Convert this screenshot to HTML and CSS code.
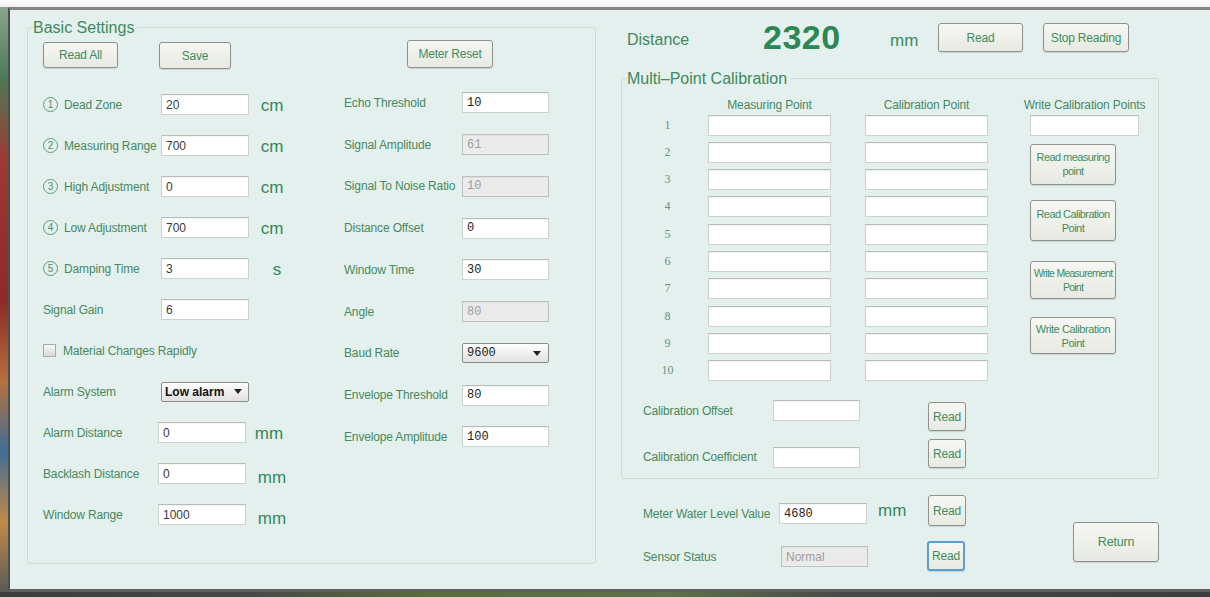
FILE: index.html
```html
<!DOCTYPE html>
<html lang="en">
<head>
<meta charset="utf-8">
<title>Level Meter Settings</title>
<link rel="stylesheet" href="styles.css">
</head>
<body>
<div class="screen">
  <div class="wall-top"></div>
  <div class="desk">
    <div class="wall-side"></div>
    <main class="window">

      <fieldset class="group basic">
        <legend>Basic Settings</legend>
        <div class="basic-body">

          <section class="col-main">
            <div class="btn-row">
              <button class="btn btn-readall">Read All</button>
              <button class="btn btn-save">Save</button>
            </div>
            <div class="form-main">
              <div class="frow"><span class="lbl"><span class="num">1</span>Dead Zone</span><input class="field" value="20"><span class="unit">cm</span></div>
              <div class="frow"><span class="lbl"><span class="num">2</span>Measuring Range</span><input class="field" value="700"><span class="unit">cm</span></div>
              <div class="frow"><span class="lbl"><span class="num">3</span>High Adjustment</span><input class="field" value="0"><span class="unit">cm</span></div>
              <div class="frow"><span class="lbl"><span class="num">4</span>Low Adjustment</span><input class="field" value="700"><span class="unit">cm</span></div>
              <div class="frow"><span class="lbl"><span class="num">5</span>Damping Time</span><input class="field" value="3"><span class="unit unit-s">s</span></div>
              <div class="frow"><span class="lbl">Signal Gain</span><input class="field" value="6"></div>
              <div class="frow"><span class="check"></span><span class="lbl">Material Changes Rapidly</span></div>
              <div class="frow"><span class="lbl">Alarm System</span><div class="combo combo-alarm"><b>Low alarm</b><span class="arrow"></span></div></div>
              <div class="frow"><span class="lbl">Alarm Distance</span><input class="field field-shift" value="0"><span class="unit">mm</span></div>
              <div class="frow"><span class="lbl">Backlash Distance</span><input class="field field-shift" value="0"><span class="unit unit-low">mm</span></div>
              <div class="frow"><span class="lbl">Window Range</span><input class="field field-shift" value="1000"><span class="unit unit-low">mm</span></div>
            </div>
          </section>

          <section class="col-aux">
            <div class="btn-row">
              <button class="btn btn-reset">Meter Reset</button>
            </div>
            <div class="form-aux">
              <div class="frow"><span class="lbl">Echo Threshold</span><input class="field mono" value="10"></div>
              <div class="frow"><span class="lbl">Signal Amplitude</span><input class="field mono" value="61" disabled></div>
              <div class="frow"><span class="lbl">Signal To Noise Ratio</span><input class="field mono" value="10" disabled></div>
              <div class="frow"><span class="lbl">Distance Offset</span><input class="field mono" value="0"></div>
              <div class="frow"><span class="lbl">Window Time</span><input class="field mono" value="30"></div>
              <div class="frow"><span class="lbl">Angle</span><input class="field mono" value="80" disabled></div>
              <div class="frow"><span class="lbl">Baud Rate</span><div class="combo combo-baud"><span>9600</span><span class="arrow"></span></div></div>
              <div class="frow"><span class="lbl">Envelope Threshold</span><input class="field mono" value="80"></div>
              <div class="frow"><span class="lbl">Envelope Amplitude</span><input class="field mono" value="100"></div>
            </div>
          </section>

        </div>
      </fieldset>

      <section class="calib-side">
        <div class="distance-row">
          <span class="dist-label">Distance</span>
          <span class="dist-value">2320</span>
          <span class="dist-unit">mm</span>
          <button class="btn btn-read-dist">Read</button>
          <button class="btn btn-stop">Stop Reading</button>
        </div>

        <fieldset class="group calib">
          <legend>Multi–Point Calibration</legend>
          <div class="cal-head-row">
            <span class="cal-head head-meas">Measuring Point</span>
            <span class="cal-head head-cal">Calibration Point</span>
            <span class="cal-head head-write">Write Calibration Points</span>
          </div>
          <div class="cal-grid">
            <input class="field write-field">
            <button class="btn cal-btn cal-btn-1">Read measuring point</button>
            <button class="btn cal-btn cal-btn-2">Read Calibration Point</button>
            <button class="btn cal-btn cal-btn-3">Write Measurement Point</button>
            <button class="btn cal-btn cal-btn-4">Write Calibration Point</button>

            <span class="cal-num">1</span><input class="field meas"><input class="field calp">
            <span class="cal-num">2</span><input class="field meas"><input class="field calp">
            <span class="cal-num">3</span><input class="field meas"><input class="field calp">
            <span class="cal-num">4</span><input class="field meas"><input class="field calp">
            <span class="cal-num">5</span><input class="field meas"><input class="field calp">
            <span class="cal-num">6</span><input class="field meas"><input class="field calp">
            <span class="cal-num">7</span><input class="field meas"><input class="field calp">
            <span class="cal-num">8</span><input class="field meas"><input class="field calp">
            <span class="cal-num">9</span><input class="field meas"><input class="field calp">
            <span class="cal-num">10</span><input class="field meas"><input class="field calp">
          </div>

          <div class="cal-extra">
            <div class="xrow xrow-top">
              <span class="lbl xlabel">Calibration Offset</span>
              <input class="field xfield">
              <button class="btn btn-small">Read</button>
            </div>
            <div class="xrow xrow-bottom">
              <span class="lbl xlabel">Calibration Coefficient</span>
              <input class="field xfield">
              <button class="btn btn-small">Read</button>
            </div>
          </div>
        </fieldset>

        <div class="status">
          <div class="status-rows">
            <div class="srow">
              <span class="lbl slabel">Meter Water Level Value</span>
              <input class="field mono sfield" value="4680">
              <span class="sunit">mm</span>
              <button class="btn btn-small btn-status">Read</button>
            </div>
            <div class="srow srow-second">
              <span class="lbl slabel">Sensor Status</span>
              <input class="field sfield sfield-status" value="Normal" disabled>
              <span class="sunit sunit-empty"></span>
              <button class="btn btn-small btn-status btn-focus">Read</button>
            </div>
          </div>
          <button class="btn btn-return">Return</button>
        </div>
      </section>

    </main>
  </div>
  <div class="wall-bottom"></div>
</div>
</body>
</html>
```

FILE: styles.css
```css
* { box-sizing: border-box; }

body {
  margin: 0;
  background: #404040;
  font-family: "Liberation Sans", Arial, sans-serif;
  overflow: hidden;
}

/* desktop around the window */
.screen {
  width: 1210px;
  height: 597px;
  display: flex;
  flex-direction: column;
}
.wall-top {
  height: 7px;
  background: linear-gradient(#fdfdfd, #f0f0f0);
}
.desk {
  display: flex;
  height: 585px;
}
.wall-side {
  width: 8px;
  background: linear-gradient(#8aa58c 0%, #4b7a55 12%, #9c3a34 26%, #8b2a28 50%, #b6703e 64%, #3f6d96 76%, #c38a46 88%, #5a5a5a 100%);
}
.wall-bottom {
  height: 5px;
  background: linear-gradient(to right, #3c3c3c 0%, #474747 20%, #5c6a3e 35%, #61704a 55%, #484848 70%, #3c3c3c 100%);
}

/* application window */
.window {
  flex: 1;
  height: 585px;
  background: #e4f0ed;
  border-top: 3px solid #848781;
  border-left: 2px solid #4e4e4e;
  border-bottom: 3px solid #5f5f5f;
  padding: 8px 0 0 17px;
  display: flex;
  align-items: flex-start;
}

/* group boxes */
.group {
  margin: 0;
  min-width: 0;
  border: 1px solid #cedcd8;
  border-radius: 3px;
  padding: 0 0 0 5px;
}
.group legend {
  font-size: 16px;
  line-height: 19px;
  color: #3e895d;
  padding: 0 3px 0 0;
}

/* buttons */
.btn {
  font-family: "Liberation Sans", Arial, sans-serif;
  font-size: 12px;
  letter-spacing: -0.2px;
  color: #3f8b5d;
  background: linear-gradient(#f6f7f2, #e7e9e3);
  border: 1px solid #8e918d;
  border-radius: 3px;
  box-shadow: 0 1px 1px rgba(0, 0, 0, 0.12);
  padding: 0;
  margin: 0;
}

/* text fields */
.field {
  width: 88px;
  height: 21px;
  margin: 0;
  padding: 0 4px;
  border: 1px solid #cdd2d0;
  border-top-color: #b7bcba;
  background: #fff;
  box-shadow: inset 0 1px 1px rgba(0, 0, 0, 0.05);
  font: 12px "Liberation Sans", Arial, sans-serif;
  color: #3a3a3a;
}
.field.mono {
  font-family: "Liberation Mono", "DejaVu Sans Mono", monospace;
  font-size: 12px;
  color: #222;
}
.field:disabled {
  background: #ebebeb;
  border-color: #bfc1c0;
  color: #9d9d9d;
}

.lbl {
  display: flex;
  align-items: center;
  font-size: 12px;
  letter-spacing: -0.15px;
  color: #46895f;
  white-space: nowrap;
}

/* Basic Settings */
.basic {
  width: 569px;
  height: 546px;
  padding-top: 5px;
}
.basic-body {
  display: flex;
  margin-left: 10px;
}
.col-main { width: 301px; }
.col-aux { flex: 1; }

.btn-row {
  display: flex;
  align-items: flex-start;
  height: 27px;
}
.btn-readall { width: 75px; height: 26px; }
.btn-save { width: 72px; height: 27px; margin-left: 41px; }
.btn-reset { width: 86px; height: 28px; margin-left: 63px; margin-top: -2px; }

.form-main { margin-top: 15px; }
.form-aux { margin-top: 13px; }

.frow {
  display: flex;
  align-items: center;
  height: 41px;
}
.form-aux .frow { height: 41.75px; }

.form-main .lbl { width: 118px; }
.form-aux .lbl { width: 118px; }
.form-aux .field { width: 87px; }

.field-shift { margin-left: -3px; }

.num {
  width: 15px;
  height: 15px;
  border: 1px solid #5f9c79;
  border-radius: 50%;
  display: inline-flex;
  align-items: center;
  justify-content: center;
  font-size: 10px;
  letter-spacing: 0;
  color: #4d8e69;
  margin-right: 6px;
}

.unit {
  width: 46px;
  text-align: center;
  font-size: 17px;
  color: #32895a;
  padding-top: 3px;
}
.unit-s { padding-left: 10px; }
.unit-low { padding-top: 9px; padding-left: 6px; }

.check {
  width: 13px;
  height: 13px;
  border: 1px solid #a9aba9;
  background: linear-gradient(#f8f8f8, #d9d9d9);
  margin-right: 7px;
}

.combo {
  height: 20px;
  border: 1px solid #8c8e8c;
  border-radius: 2px;
  background: linear-gradient(#ffffff, #e0e0e0);
  display: flex;
  align-items: center;
  justify-content: space-between;
  font-size: 12px;
  color: #111;
}
.combo-alarm { width: 88px; padding: 0 6px 0 3px; }
.combo-baud {
  width: 87px;
  padding: 0 7px 0 4px;
  font-family: "Liberation Mono", monospace;
  color: #222;
}
.arrow {
  width: 0;
  height: 0;
  border-left: 4px solid transparent;
  border-right: 4px solid transparent;
  border-top: 5px solid #222;
}

/* right side */
.calib-side {
  width: 538px;
  margin-left: 25px;
}
.distance-row {
  display: flex;
  align-items: center;
  height: 29px;
  margin-top: 5px;
}
.dist-label {
  width: 142px;
  padding-left: 6px;
  padding-top: 4px;
  font-size: 16px;
  color: #3e895d;
}
.dist-value {
  width: 127px;
  font-size: 34px;
  font-weight: bold;
  color: #2b8754;
  letter-spacing: 0.5px;
}
.dist-unit {
  width: 48px;
  padding-top: 6px;
  font-size: 17px;
  color: #3e895d;
}
.btn-read-dist { width: 85px; height: 29px; }
.btn-stop { width: 86px; height: 29px; margin-left: 20px; }

.calib {
  margin-top: 17px;
  padding: 9.5px 0 10px 5px;
}

.cal-head-row,
.cal-grid {
  display: grid;
  grid-template-columns: 81px 123px 34px 123px 42px 109px;
}
.cal-head-row {
  height: 14px;
  margin-bottom: 3px;
}
.cal-head {
  font-size: 12px;
  line-height: 14px;
  letter-spacing: -0.15px;
  color: #46895f;
  white-space: nowrap;
  justify-self: center;
}
.head-meas { grid-column: 2; }
.head-cal { grid-column: 4; }
.head-write { grid-column: 6; }

.cal-grid {
  grid-template-rows: repeat(10, 21px);
  row-gap: 6.33px;
}
.cal-num {
  grid-column: 1;
  justify-self: center;
  align-self: center;
  font-family: "Liberation Serif", "DejaVu Serif", serif;
  font-size: 12px;
  color: #6a9482;
}
.meas { grid-column: 2; width: 123px; }
.calp { grid-column: 4; width: 123px; }
.write-field { grid-column: 6; grid-row: 1; width: 109px; }

.cal-btn {
  grid-column: 6;
  width: 86px;
  font-size: 11px;
  line-height: 14px;
  letter-spacing: -0.55px;
  padding: 0 1px;
}
.cal-btn-1 { grid-row: 2 / 4; align-self: start; height: 41px; margin-top: 2px; }
.cal-btn-2 { grid-row: 4 / 6; align-self: center; height: 41px; }
.cal-btn-3 { grid-row: 6 / 8; align-self: end; height: 38px; font-size: 10.5px; letter-spacing: -0.75px; }
.cal-btn-4 { grid-row: 8 / 10; align-self: end; height: 37px; letter-spacing: -0.4px; }

.cal-extra {
  padding-left: 16px;
  margin-top: 19px;
}
.xrow { display: flex; }
.xrow-top { align-items: flex-start; height: 31px; }
.xrow-bottom { align-items: flex-end; height: 29px; margin-top: 8px; }
.xlabel { width: 130px; }
.xrow-top .xlabel { margin-top: 4px; }
.xrow-bottom .xlabel { margin-bottom: 4px; }
.xfield { width: 87px; }
.btn-small { width: 38px; height: 29px; margin-left: 68px; }
.xrow-top .btn-small { margin-top: 2px; }

.status {
  display: flex;
  justify-content: space-between;
  align-items: flex-start;
  margin-top: 16px;
  padding-left: 22px;
}
.srow {
  display: flex;
  align-items: flex-start;
}
.srow-second { margin-top: 15px; }
.slabel {
  width: 136px;
  height: 21px;
  margin-top: 8px;
}
.sfield { margin-top: 8px; }
.sunit {
  width: 61px;
  padding-left: 11px;
  margin-top: 6px;
  font-size: 17px;
  color: #32895a;
}
.btn-status { margin-left: 0; height: 31px; }
.srow-second .slabel { margin-top: 5px; }
.sfield-status { margin-top: 5px; margin-left: 2px; width: 87px; }
.sunit-empty { width: 59px; }
.btn-focus {
  height: 30px;
  border: 2px solid #5b9fd2;
}
.btn-return {
  width: 86px;
  height: 40px;
  margin-top: 27px;
  font-size: 12.5px;
}
```
